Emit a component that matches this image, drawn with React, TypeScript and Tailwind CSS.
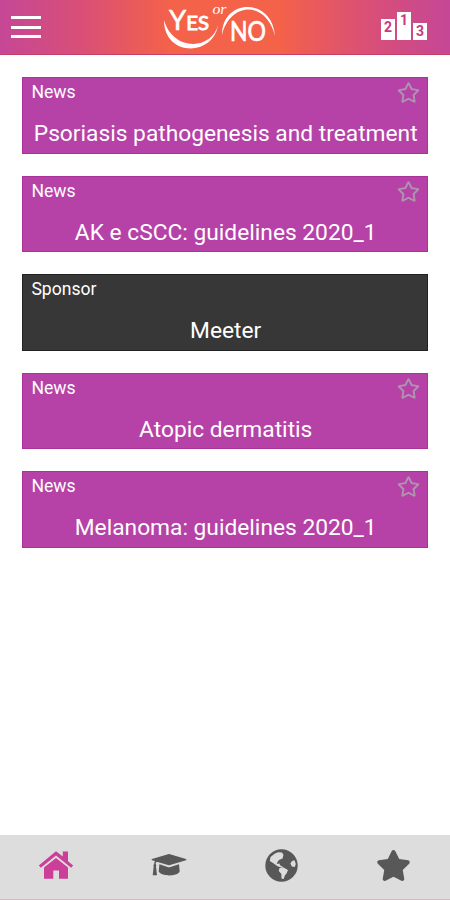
import { FaRegStar, FaStar } from "react-icons/fa";

type Card = { kind: "News" | "Sponsor"; title: string };

const cards: Card[] = [
  { kind: "News", title: "Psoriasis pathogenesis and treatment" },
  { kind: "News", title: "AK e cSCC: guidelines 2020_1" },
  { kind: "Sponsor", title: "Meeter" },
  { kind: "News", title: "Atopic dermatitis" },
  { kind: "News", title: "Melanoma: guidelines 2020_1" },
];

function Logo() {
  return (
    <svg width="118" height="54" viewBox="0 0 118 54" fill="#fff" fontFamily="Lato, sans-serif">
      {/* crescents: thick in the middle, tapering to the ends */}
      <path d="M4 20 C4 57 53 57 58 25 C52 50 13 52 4 20Z" />
      <path d="M62 35 C62 -2 112 -3 115 36 C106 0 70 2 62 35Z" />
      <text x="9" y="29.5" fontSize="27" stroke="#fff" strokeWidth="0.5" textLength="40" lengthAdjust="spacingAndGlyphs">
        Y<tspan fontSize="20" strokeWidth="0.9">ES</tspan>
      </text>
      <text x="70" y="41" fontSize="26" textLength="36" lengthAdjust="spacingAndGlyphs" stroke="#fff" strokeWidth="0.7">NO</text>
      <text x="52.5" y="14" fontSize="14" fontStyle="italic" fontFamily="Liberation Serif, serif" textLength="14" lengthAdjust="spacingAndGlyphs">or</text>
    </svg>
  );
}

function Podium() {
  return (
    <div className="flex items-end gap-0.5 text-center text-[14px] leading-none font-bold text-[#c9387c]">
      <div className="h-[21px] w-3.5 bg-white pt-px">2</div>
      <div className="h-7 w-3.5 bg-white pt-px">1</div>
      <div className="h-[17px] w-3.5 bg-white pt-px">3</div>
    </div>
  );
}

function Home() {
  return (
    <svg width="36" height="30" viewBox="0 0 36 30" fill="#cc3f98">
      <path d="M18 1.2 24.8 6.6V1.5H30V11.2L35.2 15.5 33.1 17.7 18 5.5 2.9 17.7 .8 15.5Z" />
      <path d="M18 8 30 17.6V28.7H21V20.5H15.3V28.7H6V17.6Z" />
    </svg>
  );
}

function Cap() {
  return (
    <svg width="36" height="24" viewBox="0 0 36 24" fill="#585858">
      <path d="M17 1.2Q18 .9 19 1.2L35 6Q36 6.6 35 7.2L19 12Q18 12.3 17 12L5.8 8.7Q4.5 9.5 4.6 11 5.8 12 5 13.4L6 22.3H1.7L2.7 13.4Q1.9 12 3.2 11 3.2 9.3 4 8.1L1 7.2Q0 6.6 1 6Z" />
      <path d="M8.4 11.3 16.5 13.9Q18 14.4 19.5 13.9L28 11.3 28.7 18.5C26 23.7 11 23.7 7.7 18.5Z" />
    </svg>
  );
}

function Globe() {
  return (
    <svg width="33" height="33" viewBox="0 0 33 33">
      <circle cx="16.5" cy="16.5" r="16.2" fill="#585858" />
      <g fill="#ddd">
        <path d="M10 4.5 13 3.3 17 3.5 18.5 6 17.5 9.5 14 11 12.5 13 11.8 15 14.5 14.5 15 16.3 18 18 17 18.7 12.5 17.2 8 14 4.8 12 5.5 8Z" />
        <path d="M14.3 19.2 18 18.3 23 21 21.5 24.5 19.8 26.5 18.7 30 16.5 29.5 16.4 25 13.8 22Z" />
        <path d="M27 12 29.5 11.2 30.8 15 29.8 18 26.8 17.5 25.4 14.5Z" />
      </g>
    </svg>
  );
}

function NewsCard({ kind, title }: Card) {
  const isNews = kind === "News";
  return (
    <div
      className={`flex h-[76.5px] flex-col border pr-[7px] pl-2 text-white ${
        isNews ? "border-[#aa3299] bg-[#b642a8]" : "border-[#222] bg-[#373737]"
      }`}
    >
      <div className="flex h-10 items-start justify-between">
        <span className="pt-[2px] text-[17.6px] leading-6">{kind}</span>
        {isNews && <FaRegStar className="mt-[3px] size-[23px] text-[#ad95ae]" />}
      </div>
      <h2 className="text-center text-[22.75px] leading-8 whitespace-nowrap">{title}</h2>
    </div>
  );
}

export default function App() {
  return (
    <div className="flex h-[900px] w-[450px] flex-col overflow-hidden bg-white font-[Roboto,sans-serif]">
      <header className="flex h-[55px] shrink-0 items-center justify-between border-b border-[#c83f65] bg-[linear-gradient(90deg,#c54796_0%,#d94f77_18%,#f46249_38%,#f46249_62%,#d94f77_82%,#c54796_100%)] pr-[23px] pl-[11px]">
        <button aria-label="Menu" className="flex w-[30px] flex-col gap-[6.5px]">
          <span className="h-[3px] w-full bg-white" />
          <span className="h-[3px] w-full bg-white" />
          <span className="h-[3px] w-full bg-white" />
        </button>
        <div className="ml-4">
          <Logo />
        </div>
        <div className="pb-[3px]">
          <Podium />
        </div>
      </header>

      <main className="flex flex-1 flex-col gap-[22px] pt-[22px] pr-[22px] pl-[22.4px]">
        {cards.map((card) => (
          <NewsCard key={card.title} {...card} />
        ))}
      </main>

      <nav className="grid h-[65px] shrink-0 grid-cols-4 place-items-center border-b border-[#dbb9c1] bg-[#ddd] pb-1 text-[#585858]">
        <Home />
        <Cap />
        <Globe />
        <FaStar className="size-[35px]" />
      </nav>
    </div>
  );
}
